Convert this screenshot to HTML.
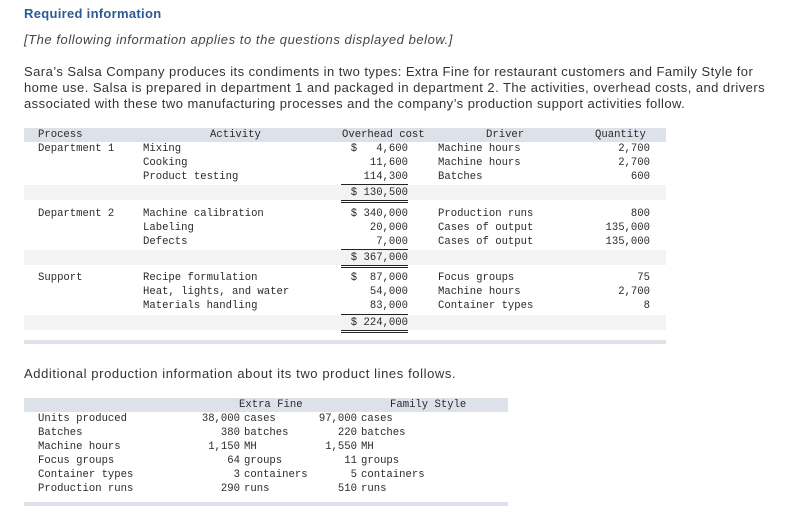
<!DOCTYPE html>
<html><head><meta charset="utf-8"><style>
body{margin:0;width:792px;height:515px;background:#fff;position:relative;overflow:hidden;font-family:"Liberation Sans",sans-serif;color:#333}
.a{position:absolute;white-space:pre}
.m{font-family:"Liberation Mono",monospace;font-size:10.6px;color:#2a2a2a;line-height:14px}
.r{text-align:right}
.band{position:absolute;background:#dde1ea}
.tot{position:absolute;background:#f3f3f3;left:24px;width:642px;height:15px}
.l{position:absolute;background:#222;height:1px}
</style></head><body>
<div class="a" style="left:24px;top:6px;font-size:13px;font-weight:bold;color:#2b5a94;letter-spacing:0.3px">Required information</div>
<div class="a" style="left:24px;top:32px;font-size:13px;font-style:italic;color:#444;letter-spacing:0.55px">[The following information applies to the questions displayed below.]</div>
<div class="a" style="left:24px;top:64px;font-size:13px;line-height:16px;color:#333;white-space:normal;width:765px;letter-spacing:0.45px">Sara’s Salsa Company produces its condiments in two types: Extra Fine for restaurant customers and Family Style for home use. Salsa is prepared in department 1 and packaged in department 2. The activities, overhead costs, and drivers associated with these two manufacturing processes and the company’s production support activities follow.</div>

<div class="band" style="left:24px;top:128px;width:642px;height:14px"></div>
<div class="tot" style="top:185px"></div>
<div class="tot" style="top:250px"></div>
<div class="tot" style="top:315px"></div>
<div class="band" style="left:24px;top:340px;width:642px;height:4px"></div>

<div class="a m" style="left:38px;top:128px">Process</div>
<div class="a m" style="left:210px;top:128px">Activity</div>
<div class="a m" style="left:342px;top:128px">Overhead cost</div>
<div class="a m" style="left:486px;top:128px">Driver</div>
<div class="a m" style="left:595px;top:128px">Quantity</div>

<div class="a m" style="left:38px;top:142px">Department 1</div>
<div class="a m" style="left:143px;top:142px">Mixing
Cooking
Product testing</div>
<div class="a m r" style="left:300px;width:108px;top:142px">$   4,600
11,600
114,300</div>
<div class="l" style="left:341px;width:67px;top:184px"></div>
<div class="a m r" style="left:300px;width:108px;top:186px">$ 130,500</div>
<div class="l" style="left:341px;width:67px;top:200px"></div>
<div class="l" style="left:341px;width:67px;top:202px"></div>
<div class="a m" style="left:438px;top:142px">Machine hours
Machine hours
Batches</div>
<div class="a m r" style="left:560px;width:90px;top:142px">2,700
2,700
600</div>

<div class="a m" style="left:38px;top:207px">Department 2</div>
<div class="a m" style="left:143px;top:207px">Machine calibration
Labeling
Defects</div>
<div class="a m r" style="left:300px;width:108px;top:207px">$ 340,000
20,000
7,000</div>
<div class="l" style="left:341px;width:67px;top:249px"></div>
<div class="a m r" style="left:300px;width:108px;top:251px">$ 367,000</div>
<div class="l" style="left:341px;width:67px;top:265px"></div>
<div class="l" style="left:341px;width:67px;top:267px"></div>
<div class="a m" style="left:438px;top:207px">Production runs
Cases of output
Cases of output</div>
<div class="a m r" style="left:560px;width:90px;top:207px">800
135,000
135,000</div>

<div class="a m" style="left:38px;top:271px">Support</div>
<div class="a m" style="left:143px;top:271px">Recipe formulation
Heat, lights, and water
Materials handling</div>
<div class="a m r" style="left:300px;width:108px;top:271px">$  87,000
54,000
83,000</div>
<div class="l" style="left:341px;width:67px;top:314px"></div>
<div class="a m r" style="left:300px;width:108px;top:316px">$ 224,000</div>
<div class="l" style="left:341px;width:67px;top:330px"></div>
<div class="l" style="left:341px;width:67px;top:332px"></div>
<div class="a m" style="left:438px;top:271px">Focus groups
Machine hours
Container types</div>
<div class="a m r" style="left:560px;width:90px;top:271px">75
2,700
8</div>

<div class="a" style="left:24px;top:366px;font-size:13px;color:#333;letter-spacing:0.6px">Additional production information about its two product lines follows.</div>

<div class="band" style="left:24px;top:398px;width:484px;height:14px"></div>
<div class="band" style="left:24px;top:502px;width:484px;height:4px"></div>
<div class="a m" style="left:239px;top:398px">Extra Fine</div>
<div class="a m" style="left:390px;top:398px">Family Style</div>
<div class="a m" style="left:38px;top:412px">Units produced
Batches
Machine hours
Focus groups
Container types
Production runs</div>
<div class="a m r" style="left:160px;width:80px;top:412px">38,000
380
1,150
64
3
290</div>
<div class="a m" style="left:244px;top:412px">cases
batches
MH
groups
containers
runs</div>
<div class="a m r" style="left:277px;width:80px;top:412px">97,000
220
1,550
11
5
510</div>
<div class="a m" style="left:361px;top:412px">cases
batches
MH
groups
containers
runs</div>
</body></html>
